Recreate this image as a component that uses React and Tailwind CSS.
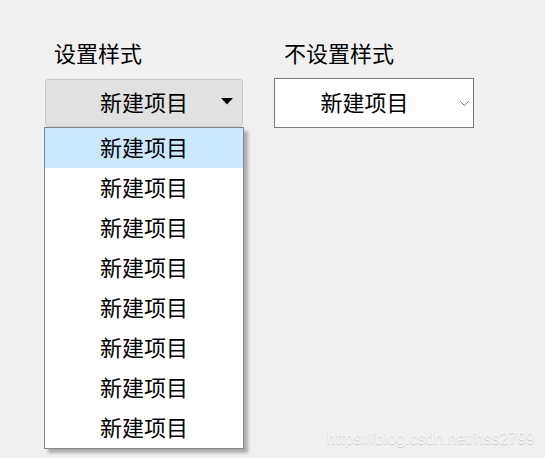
import { useState } from 'react'

const items = Array.from({ length: 8 }, () => '新建项目')

// Filled triangle of the styled combobox
const Caret = () => (
  <svg width="12" height="7" viewBox="0 0 12 7">
    <polygon points="0,0 12,0 6,6.5" fill="#000" />
  </svg>
)

// Thin chevron of the plain combobox
const Chevron = () => (
  <svg width="9" height="5" viewBox="0 0 9 5" fill="none" stroke="#6d6d6d" strokeWidth="1">
    <polyline points="0.5,0.5 4.5,4.5 8.5,0.5" />
  </svg>
)

export default function App() {
  const [active] = useState(0)

  return (
    <div
      className="relative w-[545px] h-[458px] bg-[#f0f0f0] overflow-hidden text-black"
      style={{ fontFamily: '"Noto Sans CJK SC", "Noto Sans", sans-serif' }}
    >
      <div className="flex gap-[30px] pt-[40px] pl-[44px]">
        {/* Styled combobox */}
        <div className="w-[200px] flex flex-col">
          <div className="pl-[10px] h-[24px] leading-[24px] text-[22px] mb-[15px]">设置样式</div>
          <div className="mx-[1px] h-[48px] rounded-[3px] border border-[#c9c9c9] bg-[#e1e1e1] flex items-center relative">
            <div className="flex-1 text-center text-[22px] leading-none pb-[4px]">新建项目</div>
            <div className="absolute right-[9px] top-[18px]">
              <Caret />
            </div>
          </div>
          <div className="border border-[#828790] bg-white shadow-[4px_4px_3px_rgba(0,0,0,0.28)]">
            {items.map((label, i) => (
              <div
                key={i}
                className={`h-[40px] flex items-center justify-center text-[22px] leading-none pb-[4px] ${
                  i === active ? 'bg-[#cce8ff]' : ''
                }`}
              >
                {label}
              </div>
            ))}
          </div>
        </div>

        {/* Plain combobox */}
        <div className="w-[200px] flex flex-col">
          <div className="pl-[10px] h-[24px] leading-[24px] text-[22px] mb-[14px]">不设置样式</div>
          <div className="relative h-[50px] border border-[#7a7a7a] bg-white flex items-center">
            <div className="flex-1 text-center text-[22px] leading-none pb-[4px] pr-[19px]">新建项目</div>
            <div className="absolute right-[4px] top-[22px]">
              <Chevron />
            </div>
          </div>
        </div>
      </div>

      <div
        className="absolute right-[10px] bottom-[11px] text-[16px] leading-none text-[#f6f6f6] [text-shadow:0_1px_1px_rgba(0,0,0,0.18)]"
        style={{ fontFamily: '"Liberation Sans", Arial, sans-serif' }}
      >
        https://blog.csdn.net/hss2799
      </div>
    </div>
  )
}
